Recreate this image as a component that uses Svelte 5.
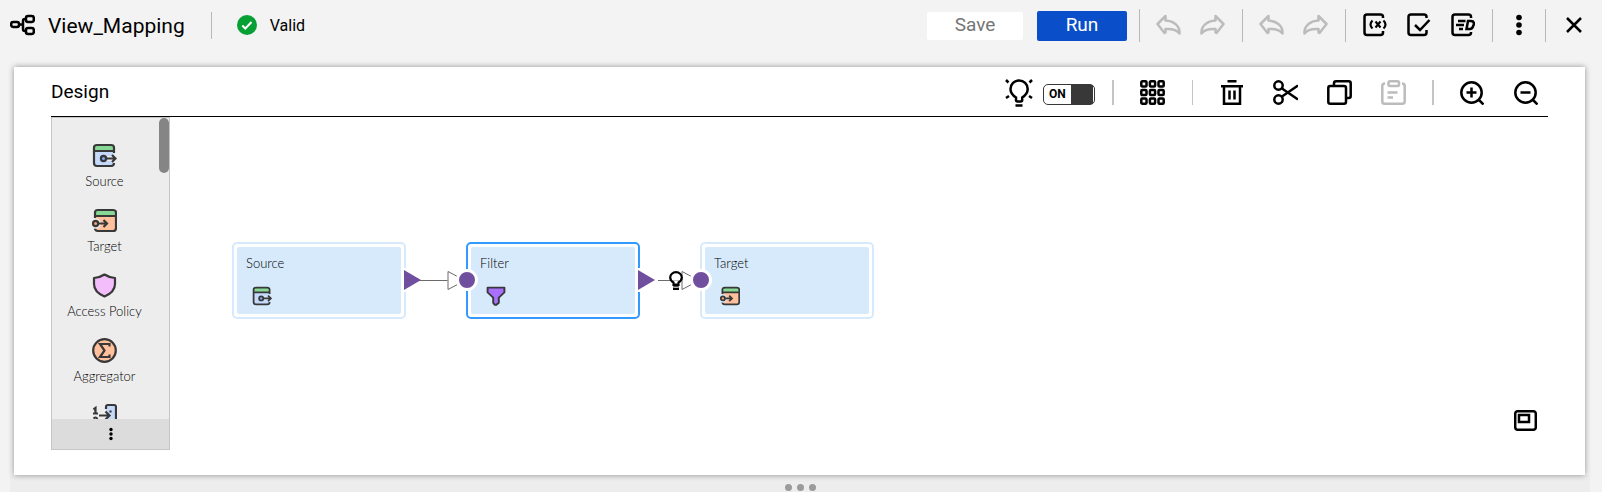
<script>
  const palette = [
    { label: 'Source', icon: 'source' },
    { label: 'Target', icon: 'target' },
    { label: 'Access Policy', icon: 'policy' },
    { label: 'Aggregator', icon: 'aggregator' },
    { label: '', icon: 'cleanse' }
  ];
  const nodes = [
    { label: 'Source', icon: 'source', x: 62, input: false, output: true, selected: false },
    { label: 'Filter', icon: 'filter', x: 296, input: true, output: true, selected: true },
    { label: 'Target', icon: 'target', x: 530, input: true, output: false, selected: false }
  ];
  let suggestions = $state(true);
</script>

{#snippet glyph(name)}
  {#if name === 'source'}
    <svg class="glyph" viewBox="0 0 25 25" aria-hidden="true">
      <path d="M2 8h20v12q0 3-3 3H5q-3 0-3-3z" fill="#c5dafb" stroke="none" />
      <path d="M2 8V4.500q0-2.500 3-2.500h14q3 0 3 2.500V8z" fill="#87d795" stroke="none" />
      <path d="M2 8h20M22 10V4.500Q22 2 19 2H5Q2 2 2 4.500V20q0 3 3 3h14q3 0 3-3" />
      <path class="knockout" d="M15.500 15.500h9" />
      <circle cx="11.500" cy="15.500" r="2.600" fill="#7ea8ee" />
      <path d="M14 15.500h9.500M20 12l3.500 3.500L20 19" />
    </svg>
  {:else if name === 'target'}
    <svg class="glyph" viewBox="0 0 25 25" aria-hidden="true">
      <path d="M3 8h21v12q0 3-3 3H6q-3 0-3-3z" fill="#ffc09b" stroke="none" />
      <path d="M3 8V4.500Q3 2 6 2h15q3 0 3 2.500V8z" fill="#87d795" stroke="none" />
      <path d="M3 8h21M3 10V4.500Q3 2 6 2h15q3 0 3 2.500V20q0 3-3 3H6q-3 0-3-3" />
      <circle class="knockout" cx="3.600" cy="15.500" r="2.800" />
      <circle cx="3.600" cy="15.500" r="2.600" fill="#f3a274" />
      <path d="M6.500 15.500H15M11.500 12l3.500 3.500-3.500 3.500" />
    </svg>
  {:else if name === 'policy'}
    <svg class="glyph" viewBox="0 0 25 25" aria-hidden="true">
      <path d="M12.500 1.500Q17 4.500 23 5v6q0 8-10.500 12.500Q2 19 2 11V5q6-.5 10.500-3.500z" fill="#f3bcfb" stroke-linejoin="round" />
    </svg>
  {:else if name === 'aggregator'}
    <svg class="glyph" viewBox="0 0 25 25" aria-hidden="true">
      <circle cx="12.500" cy="12.500" r="11.300" fill="#ffc09b" />
      <path d="M17.500 8.500V6H8l4.500 6.500L8 19h9.500v-2.500" />
    </svg>
  {:else if name === 'filter'}
    <svg class="glyph" viewBox="0 0 25 25" aria-hidden="true">
      <path d="M2 2h21v6l-7 6.500V21l-3 2.500h-2L9 21v-6.500L2 8z" fill="#a970ff" stroke-width="2.400" stroke-linejoin="round" />
    </svg>
  {:else}
    <svg class="glyph" viewBox="0 0 25 25" aria-hidden="true">
      <path d="M14 2h8q2 0 2 2v19H14z" fill="#c5dafb" stroke="none" />
      <path d="M14 6V4q0-2 2-2h6q2 0 2 2v19H14v-4" />
      <path d="M1.500 6.500L3.500 5v5.500M1 10.500h5M1.500 15.500q2.500-2 3.500 0 0 2-3.500 4.500H6M7 12.500h10M13.500 8.500l4 4-4 4" />
      <path d="M18.500 7.500v2M18.500 16v2" />
    </svg>
  {/if}
{/snippet}

{#snippet arrow(flip)}
  <svg class="muted" class:flip viewBox="0 0 25 24" width="25" height="24" aria-hidden="true">
    <path d="M1.500 11L9.500 3v4.500C18 8 24 13 23.500 20.500c-3-4-7-5-14-4.500v3.500L8.500 20z" />
  </svg>
{/snippet}

<div class="page">
  <header class="topbar">
    <svg class="logo" viewBox="0 0 25 22" width="25" height="22" aria-hidden="true">
      <rect x="1.200" y="8" width="7.800" height="5" rx="2" />
      <rect x="16" y="2" width="7.800" height="6" rx="2" />
      <rect x="16" y="14" width="7.800" height="6" rx="2" />
      <path d="M9 10.500h4M16 5h-1q-2 0-2 2v8q0 2 2 2h1" />
    </svg>
    <h1>View_Mapping</h1>
    <span class="sep title-sep"></span>
    <div class="status">
      <svg viewBox="0 0 20 20" width="20" height="20" aria-hidden="true">
        <circle cx="10" cy="10" r="10" fill="#07a035" stroke="none" />
        <path d="M5.300 10.500l3 3 6.200-6.500" stroke="#fff" stroke-width="2" />
      </svg>
      <span>Valid</span>
    </div>

    <div class="actions">
      <button class="save" disabled>Save</button>
      <button class="run">Run</button>
      <div class="group history">
        <button aria-label="Undo" disabled>{@render arrow(false)}</button>
        <button aria-label="Redo" disabled>{@render arrow(true)}</button>
      </div>
      <div class="group history">
        <button aria-label="Undo" disabled>{@render arrow(false)}</button>
        <button aria-label="Redo" disabled>{@render arrow(true)}</button>
      </div>
      <div class="group tools">
        <button aria-label="Parameters">
          <svg viewBox="0 0 24 24" width="24" height="24" aria-hidden="true">
            <path d="M20 5V4q0-2.500-2.500-2.500H4Q1.500 1.500 1.500 4v15.500Q1.500 22 4 22h13.500q2.500 0 2.500-2.500V18" />
            <path d="M9.500 7.500q-4 4 0 8M20.500 7.500q4 4 0 8M12.500 8.500l5 6M17.500 8.500l-5 6" stroke-width="2.100" />
          </svg>
        </button>
        <button aria-label="Validation">
          <svg viewBox="0 0 24 24" width="24" height="24" aria-hidden="true">
            <path d="M19.500 5V4q0-2.500-2.500-2.500H4Q1.500 1.500 1.500 4v15.500Q1.500 22 4 22h13q2.500 0 2.500-2.500V17" />
            <path d="M8 12l5 5L22.500 7" />
          </svg>
        </button>
        <button aria-label="Preview">
          <svg viewBox="0 0 24 24" width="24" height="24" aria-hidden="true">
            <path d="M20 5V4q0-2.500-2.500-2.500H4Q1.500 1.500 1.500 4v15.500Q1.500 22 4 22h13.500q2.500 0 2.500-2.500V19" />
            <path d="M7 8h7.500M5 12h8M8 16h4M17 8h3q3 0 3 3l-1 2.500q-1 2.500-3 2.500h-3.500z" />
          </svg>
        </button>
      </div>
      <div class="group more">
        <button aria-label="More actions">
          <svg class="solid" viewBox="0 0 6 22" width="6" height="22" aria-hidden="true">
            <circle cx="3" cy="3.500" r="2.800" /><circle cx="3" cy="11" r="2.800" /><circle cx="3" cy="18.500" r="2.800" />
          </svg>
        </button>
      </div>
      <div class="group close">
        <button aria-label="Close">
          <svg viewBox="0 0 16 16" width="16" height="16" aria-hidden="true"><path d="M1 1l14 14M15 1L1 15" /></svg>
        </button>
      </div>
    </div>
  </header>

  <main class="panel">
    <div class="design-bar">
      <h2>Design</h2>
      <div class="design-tools">
        <div class="suggest">
          <svg viewBox="0 0 28 28" width="28" height="28" aria-hidden="true">
            <path d="M11 21v-2.500Q5.500 15 5.500 10a8.600 8.600 0 0 1 17.200 0q0 5-5.500 8.500V21q0 1.500-1.500 1.500h-3.200Q11 22.500 11 21zM10.500 26.500h7M1 1l2.500 2.500M27 1l-2.500 2.500M1 19l3-2M27 19l-3-2" />
          </svg>
          <button class="switch" role="switch" aria-checked={suggestions} aria-label="Suggestions" onclick={() => (suggestions = !suggestions)}>
            <span>{suggestions ? 'ON' : 'OFF'}</span>
          </button>
        </div>
        <span class="rule wide"></span>
        <button class="arrange" aria-label="Arrange all">
          <svg viewBox="0 0 25 25" width="25" height="25" aria-hidden="true">
            {#each [1.3, 9.9, 18.5] as y}
              {#each [1.3, 9.9, 18.5] as x}
                <rect {x} {y} width="5.200" height="5.200" rx="1" />
              {/each}
            {/each}
          </svg>
        </button>
        <span class="rule"></span>
        <div class="edit">
          <button aria-label="Delete">
            <svg viewBox="0 0 25 25" width="25" height="25" aria-hidden="true">
              <path d="M8.500 1.300h9M2 6.200h22M5 6.200V23.700h16V6.200M10.500 10.500v9M15.500 10.500v9" />
            </svg>
          </button>
          <button aria-label="Cut">
            <svg viewBox="0 0 25 25" width="25" height="25" aria-hidden="true">
              <circle cx="5.500" cy="5.500" r="4.200" /><circle cx="5.500" cy="19.500" r="4.200" />
              <path d="M9 8.500L25 19.500M9 16.500L25 5.500" />
            </svg>
          </button>
          <button aria-label="Copy">
            <svg viewBox="0 0 25 25" width="25" height="25" aria-hidden="true">
              <rect x="1.300" y="6" width="17.700" height="17.700" rx="2" />
              <path d="M7 5V3.300q0-2 2-2h12.700q2 0 2 2V16q0 2-2 2h-2" />
            </svg>
          </button>
          <button aria-label="Paste" disabled>
            <svg class="muted" viewBox="0 0 25 25" width="25" height="25" aria-hidden="true">
              <rect x="7.500" y="1.300" width="10.500" height="4.600" rx="1.500" />
              <path d="M4 3.500Q1.300 3.500 1.300 6v15.400q0 2.300 2.500 2.300h17.400q2.500 0 2.500-2.300V6q0-2.500-2.700-2.500M6.500 12.500h10M6.500 17.500h5.500" />
            </svg>
          </button>
        </div>
        <span class="rule wide"></span>
        <div class="zoom">
          <button aria-label="Zoom in">
            <svg viewBox="0 0 24 24" width="24" height="24" aria-hidden="true">
              <circle cx="11.500" cy="11.500" r="10.200" /><path d="M19 19l4.500 4.500M6.500 11.500h10M11.500 6.500v10" />
            </svg>
          </button>
          <button aria-label="Zoom out">
            <svg viewBox="0 0 24 24" width="24" height="24" aria-hidden="true">
              <circle cx="11.500" cy="11.500" r="10.200" /><path d="M19 19l4.500 4.500M6.500 11.500h10" />
            </svg>
          </button>
        </div>
      </div>
    </div>

    <div class="workspace">
      <aside class="palette">
        <div class="scroller">
          <ul>
            {#each palette as item}
              <li>
                {@render glyph(item.icon)}
                {#if item.label}<span>{item.label}</span>{/if}
              </li>
            {/each}
          </ul>
          <div class="track"><div class="thumb"></div></div>
        </div>
        <button class="palette-more" aria-label="More transformations">
          <svg class="solid" viewBox="0 0 4 14" width="4" height="14" aria-hidden="true">
            <circle cx="2" cy="2.500" r="1.700" /><circle cx="2" cy="7" r="1.700" /><circle cx="2" cy="11.500" r="1.700" />
          </svg>
        </button>
      </aside>

      <section class="canvas">
        <svg class="links" viewBox="0 0 710 334" width="710" height="334" aria-hidden="true">
          <path d="M236 163.500h41.500M278 154.500v18M278 154.500l17 9-17 9" />
          <path d="M488 163.500h23M512 154.500v18M512 154.500l17 9-17 9" />
        </svg>
        {#each nodes as node}
          <article class="node" class:selected={node.selected} style:left="{node.x}px">
            <div class="card">
              <span>{node.label}</span>
              {@render glyph(node.icon)}
            </div>
            {#if node.input}<i class="port-in"></i>{/if}
            {#if node.output}
              <svg class="port-out" viewBox="0 0 18 24" width="18" height="24" aria-hidden="true">
                <path d="M0 0h3v24H0z" fill="#fff" /><path d="M0 2l17 10L0 22z" fill="#704f9f" />
              </svg>
            {/if}
          </article>
        {/each}
        <svg class="hint" viewBox="0 0 14 20" width="14" height="20" aria-hidden="true">
          <path d="M4.500 14v-2.500Q1.200 9.500 1.200 6.500a5.800 5.300 0 0 1 11.600 0q0 3-3.300 5V14z" fill="#fff" fill-opacity=".6" />
          <path d="M4.500 13.500h5M4 18h6" />
          <path d="M4.500 14h5v4.500h-5z" fill="#000" stroke="none" />
          <path d="M5 16.200h4" stroke="#fff" stroke-width="1" />
        </svg>
        <button class="overview" aria-label="Overview">
          <svg viewBox="0 0 23 21" width="23" height="21" aria-hidden="true">
            <rect x="1.200" y="1.200" width="20.600" height="18.600" rx="2.500" />
            <rect x="5" y="5" width="10" height="7" />
          </svg>
        </button>
      </section>
    </div>
  </main>

  <div class="grip"><i></i><i></i><i></i></div>
</div>

<style>
  :global(body) { background: #f3f3f3; }
  .page {
    box-sizing: border-box;
    min-height: 100vh;
    display: flex;
    flex-direction: column;
    font-family: Roboto, sans-serif;
    color: #000;
    overflow: hidden;
  }
  h1, h2, ul { margin: 0; padding: 0; font-weight: 400; list-style: none; }
  button { display: flex; align-items: center; justify-content: center; padding: 0; border: 0; background: none; font: inherit; color: inherit; }
  svg { display: block; flex: none; fill: none; stroke: #000; stroke-width: 2.500; }
  svg.muted { stroke: #bcbcbc; stroke-linejoin: round; }
  svg.flip { transform: scaleX(-1); }
  svg.solid { fill: #000; stroke: none; }

  .topbar { display: flex; align-items: center; height: 50px; padding: 0 20px 0 10px; }
  h1 { margin-left: 13px; padding-top: 2px; font-size: 21px; line-height: 26px; }
  .sep { width: 1px; height: 27px; background: #b8b8b8; }
  .title-sep { margin: 0 25px 0 26px; }
  .status { display: flex; align-items: center; gap: 13px; font-size: 16px; }
  .actions { display: flex; align-items: center; margin-left: auto; }
  .save, .run { box-sizing: border-box; margin-top: 2px; padding-bottom: 2px; font-size: 19px; line-height: 26px; border-radius: 2px; }
  .save { width: 96px; height: 28px; margin-right: 14px; background: #fff; color: #757575; }
  .run { width: 90px; height: 30px; margin-right: 12px; background: #0a4fc9; color: #fff; }
  .group { display: flex; align-items: center; box-sizing: border-box; height: 33px; border-left: 1px solid #b8b8b8; }
  .history { gap: 19px; padding: 0 17px 0 16px; }
  .tools { gap: 20px; padding: 0 17px; }
  .more { padding: 0 23px; }
  .close { padding-left: 20px; }

  .panel {
    position: relative;
    z-index: 1;
    flex: 1;
    display: flex;
    flex-direction: column;
    margin: 17px 17px 0 14px;
    padding: 0 37px 25px;
    background: #fff;
    box-shadow: 0 0 6px rgba(0, 0, 0, 0.4);
  }
  .design-bar { display: flex; align-items: center; justify-content: space-between; height: 49px; border-bottom: 1px solid #000; }
  h2 { font-size: 19px; line-height: 24px; }
  .design-tools { display: flex; align-items: center; padding: 2px 10px 0 0; }
  .suggest { display: flex; align-items: center; gap: 10px; margin-right: 17px; }
  .switch {
    box-sizing: border-box;
    justify-content: flex-start;
    width: 52px;
    height: 21px;
    margin-top: 3px;
    padding-left: 5px;
    border: 1px solid #383838;
    border-radius: 5px;
    background: linear-gradient(#383838, #383838) right 1px center / 22px 100% no-repeat #fff;
    font-size: 12px;
    font-weight: 700;
  }
  .rule { width: 1px; height: 25px; background: #c4c4c4; }
  .rule.wide { width: 2px; }
  .arrange { margin: 0 27px 0 26px; }
  .edit { display: flex; gap: 29px; margin: 0 26px; }
  .zoom { display: flex; gap: 30px; margin-left: 26px; }

  .workspace { flex: 1; display: flex; }
  .palette {
    box-sizing: border-box;
    display: flex;
    flex-direction: column;
    width: 119px;
    border: 1px solid #c6c6c6;
    background: #ededed;
  }
  .scroller { flex: 1 1 0; display: flex; min-height: 0; overflow: hidden; }
  .scroller ul { flex: 1; height: 0; padding: 25px 2px 0 0; }
  .scroller li { display: flex; flex-direction: column; align-items: center; gap: 3px; height: 65px; }
  .scroller li span, .card span { font: 300 13px/20px Lato, sans-serif; white-space: nowrap; }
  .glyph { width: 25px; height: 25px; stroke: #383838; stroke-width: 2.200; }
  .knockout { stroke: #ededed; stroke-width: 5; }
  .card .knockout { stroke: #d6eafc; }
  .track { width: 10px; }
  .thumb { height: 55px; border-radius: 5px; background: #858585; }
  .palette-more { height: 30px; background: #dcdcdc; }

  .canvas { position: relative; flex: 1; }
  .links { position: absolute; left: 0; top: 0; stroke: #6b6b6b; stroke-width: 1; }
  .node {
    position: absolute;
    top: 125px;
    box-sizing: border-box;
    width: 174px;
    height: 77px;
    padding: 3px;
    border: 2px solid #d6eafc;
    border-radius: 5px;
    background: #fff;
  }
  .node.selected { border-color: #3399ff; }
  .card { display: flex; flex-direction: column; gap: 13px; box-sizing: border-box; height: 100%; padding: 6px 9px; border-radius: 2px; background: #d6eafc; }
  .card .glyph { width: 20px; height: 20px; margin-left: 6px; }
  .port-in { position: absolute; left: -12px; top: 25px; width: 16px; height: 16px; border: 3px solid #fff; border-radius: 50%; background: #704f9f; }
  .port-out { position: absolute; left: 170px; top: 24px; stroke: none; }
  .hint { position: absolute; left: 499px; top: 154px; stroke-width: 2.200; }
  .overview { position: absolute; right: 11px; bottom: 19px; }

  .grip { display: flex; align-items: center; justify-content: center; gap: 5px; height: 17px; padding-top: 8px; margin: 0 12px 0 10px; box-sizing: border-box; background: #ededed; }
  .grip i { width: 7px; height: 7px; border-radius: 50%; background: #9b9b9b; }
</style>
